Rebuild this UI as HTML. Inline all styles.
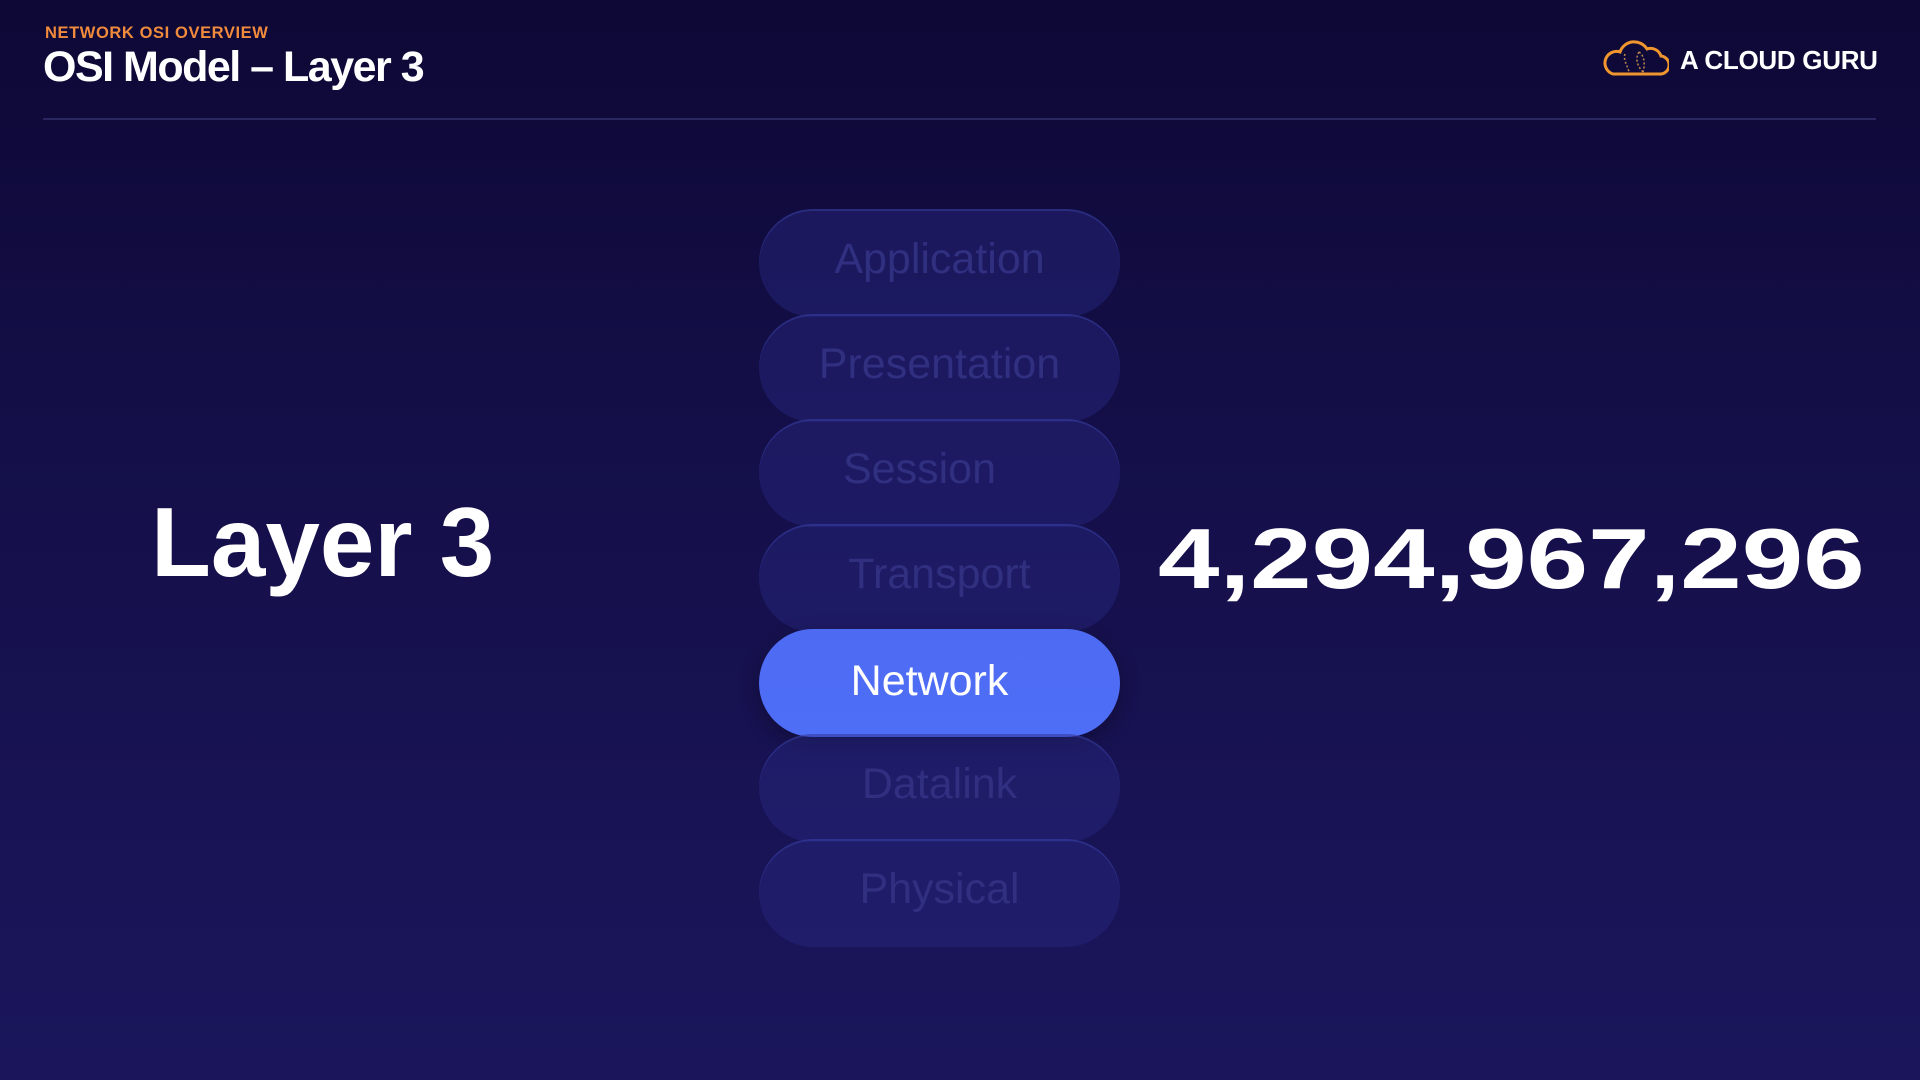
<!DOCTYPE html>
<html><head><meta charset="utf-8"><style>
html,body{margin:0;padding:0}
body{width:1920px;height:1080px;overflow:hidden;position:relative;font-family:"Liberation Sans",sans-serif;background:linear-gradient(180deg,#0e0836 0%,#140f48 40%,#1b165c 100%);}
.abs{position:absolute;white-space:nowrap}
.kick{left:45px;top:24px;font-size:16.5px;font-weight:bold;color:#f08a3c;letter-spacing:0.6px}
.title{left:43px;top:43px;font-size:43px;font-weight:bold;color:#fff;letter-spacing:-1.5px}
.rule{left:43px;top:118px;width:1833px;height:2px;background:#2a2660}
.logo{left:1680px;top:45px;font-size:26px;font-weight:bold;color:#fff;letter-spacing:-0.3px}
.pill{position:absolute;left:759px;width:361px;height:108px;border-radius:54px;background:rgba(40,40,130,0.45);box-shadow:inset 0 2px 0 rgba(70,80,190,0.35);color:#302f80;font-size:43px;text-align:center;line-height:100px}
.net{background:linear-gradient(180deg,#4d6bf2,#4f6ef7);color:#fff;box-shadow:0 6px 20px rgba(0,0,0,0.3)}
.big{font-weight:bold;color:#fff}
</style></head><body>
<div class="abs kick">NETWORK OSI OVERVIEW</div>
<div class="abs title">OSI Model – Layer 3</div>
<div class="rule abs"></div>
<svg class="abs" style="left:1603px;top:38px" width="66" height="40" viewBox="0 0 66 40">
<path d="M10 36 H56 A9 9 0 0 0 58 18 A11 11 0 0 0 44 11 A15 15 0 0 0 17 14 A11 11 0 0 0 10 36 Z" fill="none" stroke="#f0962e" stroke-width="3"/>
<path d="M22 16 C20 22 24 26 26 34 M36 14 C32 20 34 28 40 34 M36 14 C42 18 42 28 40 34" fill="none" stroke="#c0884a" stroke-width="1.5" stroke-dasharray="2 2"/>
</svg>
<div class="abs logo">A CLOUD GURU</div>
<div class="pill" style="top:209px">Application</div>
<div class="pill" style="top:314px">Presentation</div>
<div class="pill" style="top:419px"><span style="margin-left:-40px">Session</span></div>
<div class="pill" style="top:524px">Transport</div>
<div class="pill net" style="top:629px;line-height:104px"><span style="margin-left:-20px">Network</span></div>
<div class="pill" style="top:734px">Datalink</div>
<div class="pill" style="top:839px">Physical</div>
<div class="abs big" style="left:151px;top:486px;font-size:98px;letter-spacing:0px">Layer 3</div>
<div class="abs big" style="left:1158px;top:511px;font-size:85px;transform:scaleX(1.3);transform-origin:left top">4,294,967,296</div>
</body></html>
